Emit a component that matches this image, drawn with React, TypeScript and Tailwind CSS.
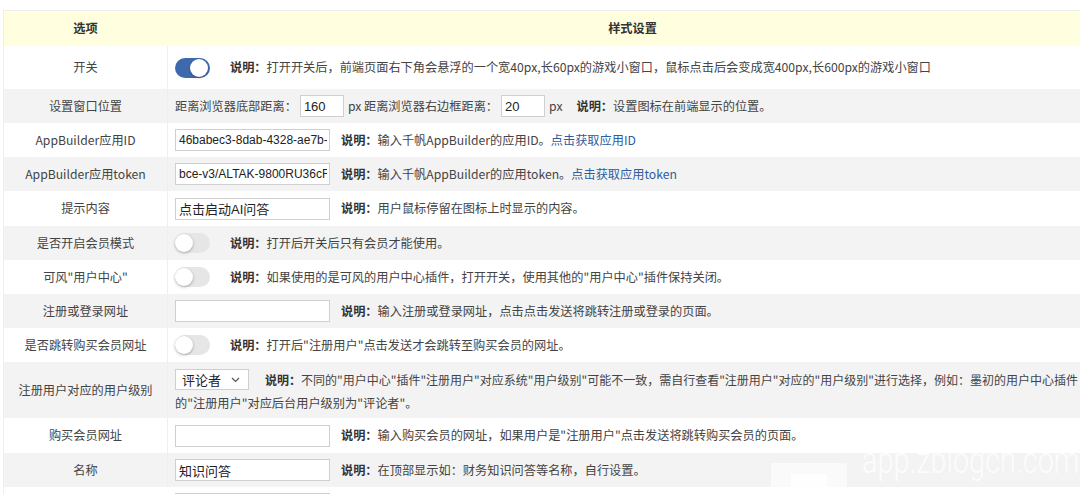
import React from "react";

const FONT = '"Microsoft YaHei", "Noto Sans CJK SC", "Noto Sans", sans-serif';
const INPUT_FONT = '"Liberation Sans", "Noto Sans CJK SC", sans-serif';

function Toggle({ on }: { on?: boolean }) {
  return on ? (
    <div className="relative h-[20px] w-[35px] shrink-0 rounded-full bg-[#3f69ad]">
      <div className="absolute right-[2px] top-[1px] h-[18px] w-[18px] rounded-full bg-white shadow-[0_1px_2px_rgba(0,0,0,0.3)]" />
    </div>
  ) : (
    <div className="relative h-[20px] w-[35px] shrink-0 rounded-full bg-[#e6e6e6]">
      <div className="absolute left-0 top-[1px] h-[18px] w-[18px] rounded-full bg-white shadow-[0_1px_3px_rgba(0,0,0,0.3)]" />
    </div>
  );
}

function Input({ value = "", w = 155, small }: { value?: string; w?: number; small?: boolean }) {
  return (
    <input
      readOnly
      value={value}
      className={`h-[22px] shrink-0 border border-[#cfcfcf] bg-white pl-[3px] pr-[2px] text-[#222] outline-none ${
        small ? "text-[12px]" : "text-[13px]"
      }`}
      style={{ width: w, fontFamily: INPUT_FONT }}
    />
  );
}

function Desc({ children }: { children: React.ReactNode }) {
  return (
    <span className="whitespace-nowrap text-[#444]">
      <b className="font-bold text-[#333]">说明：</b>
      {children}
    </span>
  );
}

function Row({
  label,
  gray,
  h = 34,
  children,
}: {
  label: string;
  gray?: boolean;
  h?: number;
  children: React.ReactNode;
}) {
  return (
    <div className={`flex ${gray ? "bg-[#f3f3f3]" : "bg-white"}`} style={{ height: h }}>
      <div className="flex w-[164px] shrink-0 items-center justify-center border-r border-[#efefef] text-[#444]">
        {label}
      </div>
      <div className="flex min-w-0 flex-1 items-center pl-[7px]">{children}</div>
    </div>
  );
}

const Link = ({ children }: { children: React.ReactNode }) => (
  <span className="text-[#2f5c9f]">{children}</span>
);

export default function App() {
  return (
    <div
      className="relative h-[494px] w-[1080px] overflow-hidden bg-white text-[12.2px]"
      style={{ fontFamily: FONT }}
    >
      <div className="ml-[3px] mt-[10px] w-[1094px] border-l border-t border-[#eeeeee]">
        <div className="flex h-[35px] bg-[#ffffe0] font-bold text-[#333]">
          <div className="flex w-[164px] shrink-0 items-center justify-center border-r border-[#fafafa]">
            选项
          </div>
          <div className="flex flex-1 items-center justify-center">样式设置</div>
        </div>

        <Row label="开关" h={43}>
          <Toggle on />
          <span className="ml-[20px]">
            <Desc>
              打开开关后，前端页面右下角会悬浮的一个宽40px,长60px的游戏小窗口，鼠标点击后会变成宽400px,长600px的游戏小窗口
            </Desc>
          </span>
        </Row>

        <Row label="设置窗口位置" gray>
          <span className="text-[#444]">距离浏览器底部距离：</span>
          <span className="ml-[3px] flex">
            <Input value="160" w={44} />
          </span>
          <span className="ml-[4px] text-[#444]">px 距离浏览器右边框距离：</span>
          <span className="ml-[3px] flex">
            <Input value="20" w={44} />
          </span>
          <span className="ml-[4px] text-[#444]">px</span>
          <span className="ml-[14px]">
            <Desc>设置图标在前端显示的位置。</Desc>
          </span>
        </Row>

        <Row label="AppBuilder应用ID">
          <Input small value="46babec3-8dab-4328-ae7b-5f2c1d9e0a11" />
          <span className="ml-[11px]">
            <Desc>
              输入千帆AppBuilder的应用ID。<Link>点击获取应用ID</Link>
            </Desc>
          </span>
        </Row>

        <Row label="AppBuilder应用token" gray>
          <Input small value="bce-v3/ALTAK-9800RU36cFk2Qz" />
          <span className="ml-[11px]">
            <Desc>
              输入千帆AppBuilder的应用token。<Link>点击获取应用token</Link>
            </Desc>
          </span>
        </Row>

        <Row label="提示内容" h={35}>
          <Input value="点击启动AI问答" />
          <span className="ml-[11px]">
            <Desc>用户鼠标停留在图标上时显示的内容。</Desc>
          </span>
        </Row>

        <Row label="是否开启会员模式" gray>
          <Toggle />
          <span className="ml-[20px]">
            <Desc>打开后开关后只有会员才能使用。</Desc>
          </span>
        </Row>

        <Row label={'可风"用户中心"'}>
          <Toggle />
          <span className="ml-[20px]">
            <Desc>如果使用的是可风的用户中心插件，打开开关，使用其他的"用户中心"插件保持关闭。</Desc>
          </span>
        </Row>

        <Row label="注册或登录网址" gray>
          <Input />
          <span className="ml-[11px]">
            <Desc>输入注册或登录网址，点击点击发送将跳转注册或登录的页面。</Desc>
          </span>
        </Row>

        <Row label="是否跳转购买会员网址">
          <Toggle />
          <span className="ml-[20px]">
            <Desc>打开后"注册用户"点击发送才会跳转至购买会员的网址。</Desc>
          </span>
        </Row>

        <div className="flex h-[56px] bg-[#f3f3f3]">
          <div className="flex w-[164px] shrink-0 items-center justify-center border-r border-[#efefef] text-[#444]">
            注册用户对应的用户级别
          </div>
          <div className="flex-1 pl-[7px] pt-[6px] text-[12px] text-[#444]">
            <div className="flex h-[23px] items-center">
              <div className="flex h-[21px] w-[74px] shrink-0 items-center justify-between border border-[#cfcfcf] bg-white pl-[6px] pr-[8px] text-[13px] text-[#222]">
                <span>评论者</span>
                <svg width="9" height="6" viewBox="0 0 9 6" fill="none">
                  <path d="M1 1l3.5 3.5L8 1" stroke="#555" strokeWidth="1.2" />
                </svg>
              </div>
              <span className="ml-[16px] whitespace-nowrap">
                <b className="font-bold text-[#333]">说明：</b>
                不同的"用户中心"插件"注册用户"对应系统"用户级别"可能不一致，需自行查看"注册用户"对应的"用户级别"进行选择，例如：墨初的用户中心插件
              </span>
            </div>
            <div className="mt-[1px] whitespace-nowrap text-[12.2px] leading-[22px]">
              的"注册用户"对应后台用户级别为"评论者"。
            </div>
          </div>
        </div>

        <Row label="购买会员网址" h={35}>
          <Input />
          <span className="ml-[11px]">
            <Desc>输入购买会员的网址，如果用户是"注册用户"点击发送将跳转购买会员的页面。</Desc>
          </span>
        </Row>

        <Row label="名称" gray>
          <Input value="知识问答" />
          <span className="ml-[11px]">
            <Desc>在顶部显示如：财务知识问答等名称，自行设置。</Desc>
          </span>
        </Row>

        <div className="flex h-[34px] items-start bg-white">
          <div className="w-[164px] shrink-0 border-r border-[#efefef]" />
          <div className="flex pl-[7px] pt-[6px]">
            <Input />
          </div>
        </div>
      </div>

      <div className="pointer-events-none absolute left-[771px] top-[463px] h-[40px] w-[76px] bg-white/60" />
      <div className="pointer-events-none absolute left-[791px] top-[474px] h-[30px] w-[36px] bg-white/70" />
      <div
        className="pointer-events-none absolute left-[862px] top-[442px] origin-left scale-x-[0.78] whitespace-nowrap text-[37px] font-light leading-none text-white/75"
        style={{ fontFamily: '"Roboto", "Liberation Sans", sans-serif' }}
      >
        app.zblogcn.com
      </div>
    </div>
  );
}
